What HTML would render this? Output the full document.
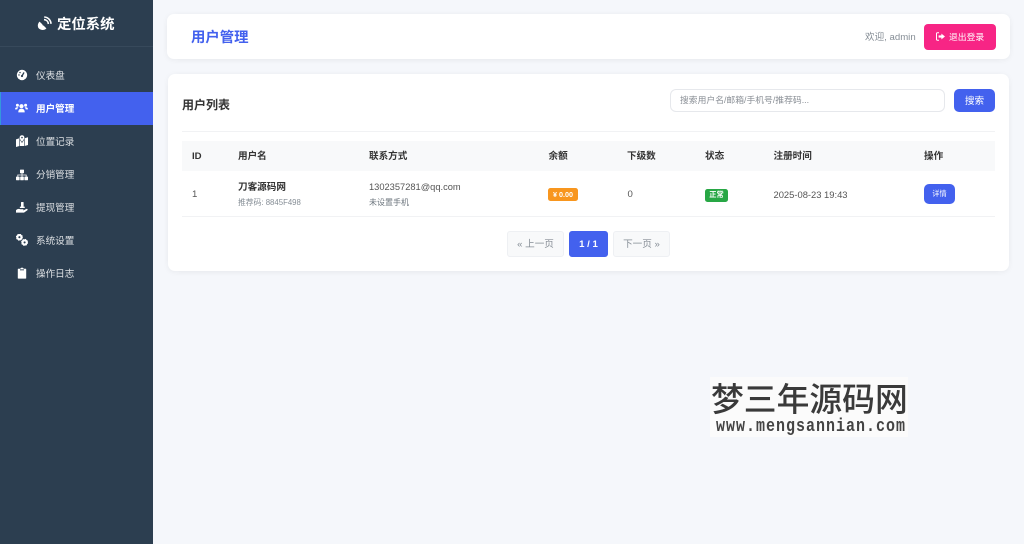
<!DOCTYPE html>
<html lang="zh-CN">
<head>
<meta charset="utf-8">
<title>用户管理</title>
<style>
*{box-sizing:border-box;margin:0;padding:0}
html,body{width:1024px;height:544px;overflow:hidden;background:#f5f7fb;font-family:"Liberation Sans","Noto Sans CJK SC",sans-serif;color:#333}
.a{position:absolute;white-space:nowrap}
.t{line-height:14px;height:14px}
#side{position:absolute;left:0;top:0;width:153px;height:544px;background:#2c3e50}
#hr{position:absolute;left:0;top:46px;width:153px;height:1px;background:#37495b}
#act{position:absolute;left:0;top:92px;width:153px;height:33px;background:#4361ee;border-left:1px solid #3498db}
.nav{left:36px;font-size:9.6px;color:#dde0e3}
.ic{position:absolute;left:16px;width:12px;height:12px;fill:#fff}
.card{position:absolute;background:#fff;border-radius:7px;box-shadow:0 1px 6px rgba(0,0,0,.06)}
.th{font-size:9.6px;font-weight:700;color:#333;top:150px}
.td{font-size:9.6px;color:#555}
.btn{position:absolute;border-radius:4px;text-align:center;color:#fff}
.pg{position:absolute;top:231px;height:26px;line-height:25px;border:1px solid #eef0f3;border-radius:3px;background:#f8f9fa;color:#868e96;font-size:9.6px;text-align:center}
</style>
</head>
<body>
<div id="side"></div>
<div id="hr"></div>
<div id="act"></div>

<svg class="ic" style="left:36px;top:16px;width:16px;height:16px" viewBox="0 0 16 16"><path d="M3.6 5.6 L10.4 12.4 C8.6 14.4 5.4 14.6 3.2 12.8 C1.2 11 1.4 7.6 3.6 5.6Z"/><circle cx="7.6" cy="8.4" r="1.2" fill="#2c3e50"/><path d="M8 3.6 C10.4 3.8 12.2 5.6 12.4 8" fill="none" stroke="#fff" stroke-width="1.6"/><path d="M8.2 1 C12 1.2 14.8 4 15 7.8" fill="none" stroke="#fff" stroke-width="1.6"/></svg>
<div class="a" style="left:57px;top:15px;font-size:14.4px;line-height:20px;font-weight:700;color:#fff">定位系统</div>

<svg class="ic" style="top:69px" viewBox="0 0 12 12"><circle cx="6" cy="6" r="5.2"/><path d="M6 7 L8 3.4" stroke="#2c3e50" stroke-width="1.3"/><circle cx="3" cy="6" r=".7" fill="#2c3e50"/><circle cx="4" cy="3.6" r=".7" fill="#2c3e50"/><circle cx="6" cy="7" r="1.1" fill="#2c3e50"/></svg>
<div class="a t nav" style="top:70px">仪表盘</div>

<svg class="ic" style="left:15px;top:102px;width:13px;height:12px" viewBox="0 0 13 12"><circle cx="6.5" cy="4.2" r="2.1"/><circle cx="2.4" cy="3.2" r="1.5"/><circle cx="10.6" cy="3.2" r="1.5"/><path d="M3.3 10.4 C3.3 7.6 4.6 6.8 6.5 6.8 C8.4 6.8 9.7 7.6 9.7 10.4Z"/><path d="M0 7.4 C0 5.8 1.2 5 3.4 5.4 C2.8 6 2.4 6.6 2.3 7.4Z"/><path d="M13 7.4 C13 5.8 11.8 5 9.6 5.4 C10.2 6 10.6 6.6 10.7 7.4Z"/></svg>
<div class="a t" style="left:36px;top:103px;font-size:9.6px;font-weight:700;color:#fff">用户管理</div>

<svg class="ic" style="top:135px" viewBox="0 0 12 12"><path d="M0 4.4 L3.4 3.2 V11 L0 12Z"/><path d="M4 5 L6 8 L8 5 V11 L4 11Z"/><path d="M8.6 3.2 L12 2.2 V10 L8.6 11Z"/><path d="M6 0.2 A2.4 2.4 0 0 1 8.4 2.6 C8.4 4 6 6.8 6 6.8 C6 6.8 3.6 4 3.6 2.6 A2.4 2.4 0 0 1 6 .2Z"/><circle cx="6" cy="2.6" r=".8" fill="#2c3e50"/></svg>
<div class="a t nav" style="top:136px">位置记录</div>

<svg class="ic" style="top:169px" viewBox="0 0 12 12"><rect x="4" y="0.6" width="4" height="3.6" rx=".5"/><rect x="0" y="7.6" width="3.6" height="3.6" rx=".5"/><rect x="4.2" y="7.6" width="3.6" height="3.6" rx=".5"/><rect x="8.4" y="7.6" width="3.6" height="3.6" rx=".5"/><path d="M5.6 4 H6.4 V5.6 H10.6 V7.6 H9.8 V6.4 H6.4 V7.6 H5.6 V6.4 H2.2 V7.6 H1.4 V5.6 H5.6Z"/></svg>
<div class="a t nav" style="top:169px">分销管理</div>

<svg class="ic" style="top:202px" viewBox="0 0 12 12"><rect x="5" y="0" width="2.6" height="5" rx=".6"/><rect x="3.8" y="4.6" width="5" height="1.4" rx=".5"/><path d="M0 8.2 C1.4 6.6 3 6.6 4.4 7.2 H6.8 C7.8 7.2 7.8 8.4 6.8 8.4 H5 H7.4 L10.2 7 C11.4 6.6 12.2 7.6 11.2 8.4 L8 10.6 H0Z"/></svg>
<div class="a t nav" style="top:202px">提现管理</div>

<svg class="ic" style="top:234px" viewBox="0 0 12 12"><circle cx="3.4" cy="3.2" r="2.1" fill="none" stroke="#fff" stroke-width="2.1"/><circle cx="3.4" cy="3.2" r="3" fill="none" stroke="#fff" stroke-width="1" stroke-dasharray="1.2 1.15"/><circle cx="8.6" cy="8.4" r="2.1" fill="none" stroke="#fff" stroke-width="2.1"/><circle cx="8.6" cy="8.4" r="3" fill="none" stroke="#fff" stroke-width="1" stroke-dasharray="1.2 1.15"/></svg>
<div class="a t nav" style="top:235px">系统设置</div>

<svg class="ic" style="top:267px" viewBox="0 0 12 12"><path d="M2.4 1.8 H4.4 C4.6 .2 7.4 .2 7.6 1.8 H9.6 C10 1.8 10.2 2 10.2 2.4 V11 C10.2 11.4 10 11.6 9.6 11.6 H2.4 C2 11.6 1.8 11.4 1.8 11 V2.4 C1.8 2 2 1.8 2.4 1.8Z"/><rect x="4" y="2.4" width="4" height=".9" fill="#2c3e50"/></svg>
<div class="a t nav" style="top:268px">操作日志</div>

<div class="card" style="left:167px;top:14px;width:843px;height:45px"></div>
<div class="a" style="left:191px;top:28px;font-size:14.4px;line-height:20px;font-weight:700;color:#4361ee">用户管理</div>
<div class="a t" style="left:865px;top:31px;font-size:9.6px;color:#868e96">欢迎, admin</div>
<div class="btn" style="left:924px;top:24px;width:71.5px;height:25.5px;background:#f72585"></div>
<svg class="a" style="left:936px;top:32px" width="9" height="9" viewBox="0 0 9 9"><path d="M3 .8 H1.4 C.8 .8 .5 1.1 .5 1.7 V7.3 C.5 7.9 .8 8.2 1.4 8.2 H3" fill="none" stroke="#fff" stroke-width="1"/><path d="M5.4 1.6 L9 4.5 L5.4 7.4 V5.6 H2.6 V3.4 H5.4Z" fill="#fff"/></svg>
<div class="a t" style="left:949px;top:30px;font-size:8.8px;color:#fff">退出登录</div>

<div class="card" style="left:167.5px;top:74px;width:841.5px;height:196.5px"></div>
<div class="a" style="left:182px;top:97px;font-size:12px;line-height:17px;font-weight:700;color:#333">用户列表</div>
<div class="a" style="left:669.5px;top:88.5px;width:275.5px;height:23px;background:#fff;border:1px solid #e6e8ec;border-radius:6px"></div>
<div class="a t" style="left:680px;top:93px;font-size:8.8px;color:#8a8f96">搜索用户名/邮箱/手机号/推荐码...</div>
<div class="btn" style="left:954px;top:88.5px;width:41px;height:23px;background:#4361ee;border-radius:5px;font-size:9.6px;line-height:26px">搜索</div>

<div class="a" style="left:182px;top:131px;width:813px;height:1px;background:#f1f2f4"></div>
<div class="a" style="left:182px;top:141px;width:813px;height:30px;background:#f8f9fa"></div>
<div class="a t th" style="left:192px">ID</div>
<div class="a t th" style="left:238px">用户名</div>
<div class="a t th" style="left:369px">联系方式</div>
<div class="a t th" style="left:548.5px">余额</div>
<div class="a t th" style="left:627px">下级数</div>
<div class="a t th" style="left:705px">状态</div>
<div class="a t th" style="left:773.5px">注册时间</div>
<div class="a t th" style="left:924px">操作</div>

<div class="a t td" style="left:192px;top:188px">1</div>
<div class="a t" style="left:238px;top:181px;font-size:9.6px;font-weight:700;color:#333">刀客源码网</div>
<div class="a t" style="left:238px;top:196px;font-size:7.8px;color:#868e96">推荐码: 8845F498</div>
<div class="a t td" style="left:369px;top:180px;font-size:9.3px">1302357281@qq.com</div>
<div class="a t" style="left:369px;top:196px;font-size:8px;color:#6c757d">未设置手机</div>
<div class="btn" style="left:548px;top:188px;width:30px;height:13px;background:#f8961e;border-radius:2.5px;font-size:7.2px;font-weight:700;line-height:13px">¥ 0.00</div>
<div class="a t td" style="left:627.5px;top:188px">0</div>
<div class="btn" style="left:705px;top:189px;width:23px;height:12.5px;background:#28a745;border-radius:2.5px;font-size:7.2px;font-weight:700;line-height:12.5px">正常</div>
<div class="a t td" style="left:773.5px;top:188px;font-size:9.4px">2025-08-23 19:43</div>
<div class="btn" style="left:924px;top:184px;width:31px;height:19.5px;background:#4361ee;border-radius:5px;font-size:7.2px;line-height:19.5px">详情</div>
<div class="a" style="left:182px;top:216px;width:813px;height:1px;background:#f1f2f4"></div>

<div class="pg" style="left:507px;width:57px">« 上一页</div>
<div class="pg" style="left:569px;width:39px;background:#4361ee;border-color:#4361ee;color:#fff;font-weight:700">1 / 1</div>
<div class="pg" style="left:613px;width:57px">下一页 »</div>

<div class="a" style="left:710px;top:377px;width:198px;height:60px;background:#fbfbfb"></div>
<div class="a" style="left:711px;top:379px;font-family:'Liberation Sans','Noto Sans CJK SC',sans-serif;font-size:32.8px;line-height:42px;font-weight:500;color:#3a3a3a">梦三年源码网</div>
<div class="a" style="left:716px;top:418px;font-family:'Liberation Mono',monospace;font-size:15px;line-height:18px;font-weight:700;color:#444;letter-spacing:1px;transform:scaleY(1.25);transform-origin:0 50%">www.mengsannian.com</div>
</body>
</html>
